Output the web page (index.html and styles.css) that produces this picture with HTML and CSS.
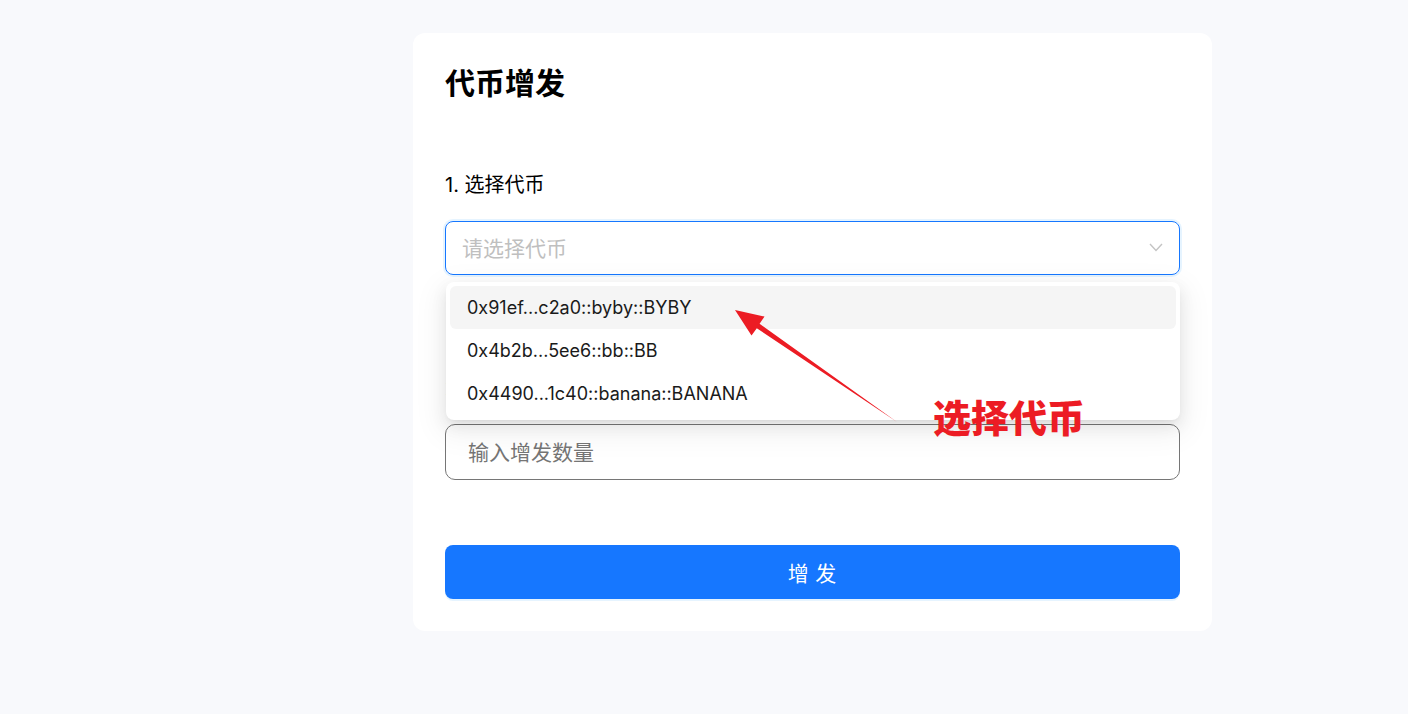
FILE: index.html
```html
<!DOCTYPE html>
<html lang="zh-CN">
<head>
<meta charset="utf-8">
<title>代币增发</title>
<link rel="stylesheet" href="styles.css">
</head>
<body>
<main class="card">
  <h1 class="title">代币增发</h1>
  <div class="field field-first">
    <div class="label">1. 选择代币</div>
    <div class="select-wrap">
      <div class="select">
        <span class="placeholder">请选择代币</span>
        <svg class="chevron" width="14" height="9" viewBox="0 0 14 9"><path d="M1 1 L7 7.5 L13 1" fill="none" stroke="#c4c4c4" stroke-width="1.4"/></svg>
      </div>
      <ul class="dropdown">
        <li class="option active">0x91ef...c2a0::byby::BYBY</li>
        <li class="option">0x4b2b...5ee6::bb::BB</li>
        <li class="option">0x4490...1c40::banana::BANANA</li>
      </ul>
    </div>
  </div>
  <div class="field field-second">
    <div class="label">2. 增发数量</div>
    <input class="amount" type="text" placeholder="输入增发数量">
  </div>
  <button class="submit">增 发</button>
</main>
<svg class="annot-arrow" width="1408" height="714" viewBox="0 0 1408 714">
  <polygon points="735,310 751.5,335.5 756.8,328.3 897,422 759.6,323.8 764.5,316.5" fill="#ec1c24"/>
</svg>
<div class="annot-text">选择代币</div>
</body>
</html>
```
FILE: styles.css
```css
* { box-sizing: border-box; }
html, body { margin: 0; padding: 0; }
body {
  background: #f8f9fc;
  width: 1408px;
  height: 714px;
  overflow: hidden;
  position: relative;
  font-family: "Noto Sans CJK SC", sans-serif;
  color: rgba(0,0,0,0.88);
}
.card {
  margin: 33px 0 0 413px;
  width: 799px;
  background: #fff;
  border-radius: 12px;
  padding: 32px 32px 32px;
  display: flex;
  flex-direction: column;
}
.title {
  margin: 0;
  font-size: 30px;
  line-height: 32px;
  font-weight: 700;
  color: #000;
}
.field-first { margin-top: 74px; }
.label {
  font-size: 20px;
  line-height: 28px;
  color: #000;
  font-family: "Inter", "Noto Sans CJK SC", sans-serif;
}
.select-wrap { position: relative; margin-top: 22px; }
.select {
  height: 54px;
  border: 1px solid #1677ff;
  border-radius: 8px;
  box-shadow: 0 0 0 2px rgba(5,145,255,0.1);
  display: flex;
  align-items: center;
  justify-content: space-between;
  padding: 0 16px 2px 16px;
}
.placeholder {
  font-size: 21px;
  color: #bfbfbf;
}
.chevron { display: block; margin-top: 0; }
.dropdown {
  position: absolute;
  top: 61px;
  left: 1px;
  right: 0;
  margin: 0;
  list-style: none;
  padding: 4px 4px 5px;
  background: #fff;
  border-radius: 8px;
  z-index: 5;
  box-shadow: 0 6px 16px 0 rgba(0,0,0,0.08), 0 3px 6px -4px rgba(0,0,0,0.12), 0 9px 28px 8px rgba(0,0,0,0.05);
}
.option {
  height: 43px;
  line-height: 43px;
  padding: 0 17px;
  font-family: "Inter", sans-serif;
  font-size: 18px;
  color: #1a1a1a;
  border-radius: 6px;
}
.option.active { background: #f5f5f5; }
.field-second { margin-top: 99px; }
.field-second .label { margin-bottom: 22px; }
.amount {
  display: block;
  width: 100%;
  height: 56px;
  border: 1px solid #767676;
  border-radius: 10px;
  padding: 0 22px 3px;
  font-size: 21px;
  font-family: "Noto Sans CJK SC", sans-serif;
  outline: none;
  background: #fff;
}
.amount::placeholder { color: #757575; }
.submit {
  margin-top: 65px;
  height: 54px;
  border: none;
  border-radius: 8px;
  background: #1677ff;
  color: #fff;
  font-family: "Noto Sans CJK SC", sans-serif;
  font-size: 21px;
  letter-spacing: 1px;
  box-shadow: 0 2px 0 rgba(5,145,255,0.1);
}
.annot-arrow {
  position: absolute;
  left: 0;
  top: 0;
  z-index: 10;
  pointer-events: none;
}
.annot-text {
  position: absolute;
  left: 933px;
  top: 391px;
  z-index: 11;
  font-family: "Noto Sans CJK SC", sans-serif;
  font-weight: 900;
  font-size: 38px;
  line-height: 50px;
  color: #ec1c24;
}
```
